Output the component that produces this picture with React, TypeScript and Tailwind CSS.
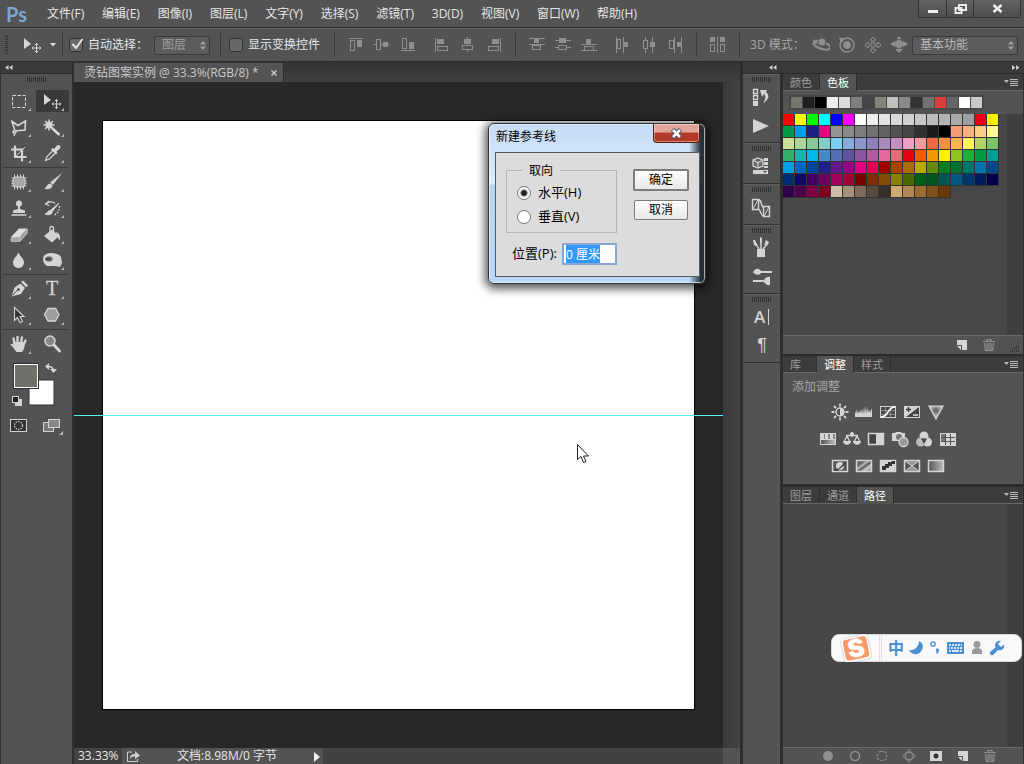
import React, { useEffect, useRef, useState } from 'react';

const LIGHT = '#d4d4d4';
const DIM = '#8f8f8f';

const MENUS = ['文件(F)', '编辑(E)', '图像(I)', '图层(L)', '文字(Y)', '选择(S)', '滤镜(T)', '3D(D)', '视图(V)', '窗口(W)', '帮助(H)'];

const RECENT = ['#75766c', '#1f1f1d', '#000000', '#efefef', '#dddddd', '#7f7f7f', '#444444', '#828376', '#c0c0c0', '#8a8a8a', '#333333', '#727272', '#dc3e3e', '#666666', '#ffffff', '#c9c9c9'];

const SWATCHES = [
  '#ff0000', '#ffff00', '#00ff00', '#00ffff', '#0000ff', '#ff00ff', '#ffffff', '#eeeeee', '#e4e4e4', '#dadada', '#d0d0d0', '#c6c6c6', '#bcbcbc', '#b3b3b3', '#a9a9a9', '#9f9f9f', '#e60012', '#fff100',
  '#009944', '#00a0e9', '#1d2088', '#e4007f', '#959595', '#898989', '#7d7d7d', '#717171', '#626262', '#535353', '#464646', '#313131', '#1c1c1c', '#000000', '#f29b76', '#f6b37f', '#facd89', '#fff799',
  '#cce198', '#acd598', '#89c997', '#84ccc9', '#7ecef4', '#88abda', '#8c97cb', '#8f82bc', '#aa89bd', '#c490bf', '#f19ec2', '#f29c9f', '#ec6941', '#f19149', '#f8b551', '#fff45c', '#b3d465', '#80c269',
  '#32b16c', '#13b5b1', '#00b7ee', '#448aca', '#556fb5', '#5f52a0', '#8957a1', '#ae5da1', '#ea68a2', '#eb6877', '#e60012', '#eb6100', '#f39800', '#fff100', '#8fc31f', '#22ac38', '#009944', '#009e96',
  '#00a0e9', '#0068b7', '#00479d', '#1d2088', '#601986', '#920783', '#e4007f', '#e5004f', '#a40000', '#a84200', '#ac6a00', '#b7aa00', '#638c0b', '#097c25', '#007130', '#00736d', '#0075a9', '#004986',
  '#002e73', '#100964', '#440062', '#6a005f', '#a4005b', '#a40035', '#7d0000', '#7f2d00', '#834e00', '#8a8000', '#486a00', '#005e15', '#005520', '#005752', '#005982', '#003567', '#001c58', '#03004c',
  '#31004a', '#500047', '#7e0043', '#7d0022', '#cfbea7', '#a5917a', '#7e6b5a', '#59493f', '#362e2b', '#cfa972', '#b28850', '#996c33', '#81511c', '#6a3906',
];

// four-way arrow used by the move tool
const moveCross = (
  <g stroke={LIGHT} fill="none">
    <path d="M20.5 11.500v9M16 16h9" />
    <path d="M19 13l1.500-1.500 1.500 1.500M19 19l1.500 1.500 1.500-1.500M17.500 14.500l-1.500 1.500 1.500 1.500M23.500 14.500l1.500 1.500-1.500 1.500" />
  </g>
);

// every tool is drawn in a 32x26 cell
const TOOLS: { name: string; art: React.ReactNode; plain?: boolean }[][] = [
  [
    { name: '矩形选框', art: <rect x="9.500" y="7.500" width="13" height="12" fill="none" stroke={LIGHT} strokeDasharray="3.500 1.500" /> },
    { name: '移动', art: <><path d="M8 6v11l7-5z" fill={LIGHT} />{moveCross}</> },
    { name: '多边形套索', art: <path d="M9 7.500l6 4 7.500-4.500-.5 9-10 1zM12 16.500c-2 0-3 2-1 2.500s3-2 1.500-2.500M11 19c.5 1 1 2 0 3" fill="none" stroke={LIGHT} strokeWidth="1.600" /> },
    { name: '魔棒', art: <><path d="M13 5.500v11M7.500 11h11M9 7l8 8M17 7l-8 8" stroke={LIGHT} strokeWidth="1.500" /><circle cx="13" cy="11" r="3.500" fill={LIGHT} /><path d="M16 14l7.500 7" stroke={LIGHT} strokeWidth="2.500" /></> },
    { name: '裁剪', art: <><path d="M12 5.500v11.500h11.500M8 9.500h11v12" fill="none" stroke={LIGHT} strokeWidth="2.200" /><path d="M13 16l9-9" stroke={LIGHT} /></> },
    { name: '吸管', art: <><path d="M9.500 20.500l1.500-4 6-6 2.500 2.500-6 6z" fill="#555" stroke={LIGHT} strokeWidth="1.300" /><path d="M15 9.500l1.500-1.500 1.500 1 3-3.500c2-1.500 4.500 1 3 3l-3.500 3 1 1.500-1.500 1.500z" fill={LIGHT} /></> },
  ],
  [
    { name: '修补', art: <><path d="M11.500 5.500v15M14.500 5.500v15M17.500 5.500v15M20.500 5.500v15M8.500 9h15M8.500 12h15M8.500 14.500h15M8.500 17h15" stroke={LIGHT} /><rect x="10" y="8" width="12" height="10" rx="3" fill="#a8a8a8" stroke={LIGHT} /></> },
    { name: '画笔', art: <><path d="M25 5l-8 10.500-2.500-2z" fill={LIGHT} stroke={LIGHT} strokeWidth=".6" /><path d="M8 19.500c2 0 2.500-3.500 4.500-4.500s4.500 1 3.500 3-5 3-8 1.500z" fill={LIGHT} /></> },
    { name: '仿制图章', art: <><circle cx="16" cy="8.500" r="3" fill={LIGHT} /><path d="M15 10h2v4l5 1.500v2.500h-12v-2.500l5-1.500z" fill={LIGHT} /><path d="M8.500 20h15" stroke={LIGHT} strokeWidth="1.500" /></> },
    { name: '历史记录画笔', art: <><path d="M9 19c2 0 2.500-3 4.500-3.500s3.500 1 2.500 2.500-4 2.500-7 1zM23 8l-6.500 8-1.500-1z" fill={LIGHT} stroke={LIGHT} /><path d="M10 9c3-3 7-2.500 9-.5M13 6l-3.500 3 4 1.500" fill="none" stroke={LIGHT} strokeWidth="1.300" /><path d="M23.500 11c0 4-1.500 7-5 9" fill="none" stroke={LIGHT} strokeWidth="1.500" strokeDasharray="1.500 1.500" /></> },
    { name: '橡皮擦', art: <><path d="M8 16l8-8.500h8.500l-7.500 8.500z" fill="#dedede" /><path d="M8 16.500h9v4H8zM17.500 16.500l7-8v3.500l-7 8z" fill="#a6a6a6" stroke={LIGHT} strokeWidth=".6" /></> },
    { name: '油漆桶', art: <><path d="M8 15l8-6.500 7 6.500-7 6.500z" fill={LIGHT} /><path d="M14 13V7c0-2 3.500-2 3.500 0v5" fill="none" stroke={LIGHT} strokeWidth="1.300" /><path d="M20 11c3.500 1 4.500 4 4 8-2-.5-2.500-3-3-5z" fill={LIGHT} /></> },
    { name: '模糊', art: <path d="M15.500 5.500c1.500 4 5.500 6 5.500 10a5.300 5.300 0 0 1-11 0c0-4 4-6 5.500-10z" fill={LIGHT} /> },
    { name: '海绵', art: <><path d="M7 12c0-4 4-6 8-6 4 0 8 1 10 4l1 6-2 4-5-1h-5c-4 1-7-3-7-7z" fill={LIGHT} /><ellipse cx="13" cy="12" rx="3.500" ry="2.500" fill="#555" stroke="#999" strokeWidth=".6" /><path d="M9 12h4" stroke="#444" strokeWidth="1.500" /></> },
  ],
  [
    { name: '钢笔', art: <><path d="M8.500 20.500l3-9 6-4 4.500 4.500-4 6z" fill={LIGHT} /><path d="M18 6l2-1.500 5 5-1.500 2z" fill={LIGHT} /><path d="M9.500 19.500l5.500-6" stroke="#444" /><circle cx="15.500" cy="13.500" r="1.300" fill="#444" /></> },
    { name: '文字', art: <text x="16" y="19" textAnchor="middle" fontSize="20" fill={LIGHT} stroke={LIGHT} strokeWidth=".3" fontFamily="Liberation Serif, serif">T</text> },
    { name: '路径选择', art: <path d="M11.500 5.500v13l3-3 2.500 5 2.500-1-2.500-5h4z" fill="#333" stroke={LIGHT} strokeWidth="1.100" /> },
    { name: '多边形', art: <path d="M8.500 12.500l3.500-6h7.500l3.500 6-3.500 6.500H12z" fill="#9c9c9c" stroke={LIGHT} strokeWidth="1.300" /> },
  ],
  [
    { name: '抓手', art: <><path d="M11.500 12.500L10.500 7.500M14.500 11.500V6M18 11.500L19 6.500M20.500 13.500L22.500 9.500" stroke={LIGHT} strokeWidth="2.400" strokeLinecap="round" /><path d="M10.500 11h11.500c0 4-1 8-3 10h-5.500c-2-3-4-5-6-7.500 1-1.500 3-.5 3.500 1z" fill={LIGHT} /></> },
    { name: '缩放', plain: true, art: <><circle cx="14" cy="10" r="5" fill="#888" stroke={LIGHT} strokeWidth="1.500" /><path d="M18 14l5.500 6" stroke={LIGHT} strokeWidth="3" strokeLinecap="round" /></> },
  ],
];

const ALIGN: { name: string; art: React.ReactNode }[][] = [
  [
    { name: '顶对齐', art: <><path d="M2 2.500h14" /><rect x="3.500" y="4.500" width="4" height="10" /><rect x="10.500" y="4.500" width="4" height="6" fill={DIM} /></> },
    { name: '垂直居中对齐', art: <><path d="M1 8.500h3M8 8.500h8" /><rect x="3.500" y="3.500" width="4" height="10" /><rect x="10.500" y="6.500" width="4" height="4" fill={DIM} /></> },
    { name: '底对齐', art: <><path d="M2 14.500h14" /><rect x="3.500" y="2.500" width="4" height="10" /><rect x="10.500" y="6.500" width="4" height="6" fill={DIM} /></> },
  ],
  [
    { name: '左对齐', art: <><path d="M2.500 2v14" /><rect x="4.500" y="3.500" width="6" height="4" fill={DIM} /><rect x="4.500" y="10.500" width="10" height="4" /></> },
    { name: '水平居中对齐', art: <><path d="M8.500 1v15" /><rect x="5.500" y="3.500" width="6" height="4" fill={DIM} /><rect x="3.500" y="9.500" width="10" height="4" fill="#535353" /></> },
    { name: '右对齐', art: <><path d="M15.500 2v14" /><rect x="7.500" y="3.500" width="6" height="4" fill={DIM} /><rect x="3.500" y="10.500" width="10" height="4" /></> },
  ],
  [
    { name: '按顶分布', art: <><path d="M1 2.500h16M1 8.500h16" /><rect x="6.500" y="3.500" width="4" height="3" fill={DIM} /><rect x="4.500" y="9.500" width="8" height="4" /></> },
    { name: '垂直居中分布', art: <><path d="M1 4.500h16M1 11.500h16" /><rect x="5.500" y="2.500" width="6" height="4" fill={DIM} /><rect x="4.500" y="9.500" width="8" height="4" fill="#535353" /></> },
    { name: '按底分布', art: <><path d="M1 8.500h16M1 14.500h16" /><rect x="6.500" y="3.500" width="4" height="4" fill={DIM} /><rect x="4.500" y="10.500" width="9" height="4" /></> },
  ],
  [
    { name: '按左分布', art: <><path d="M2.500 1v16M9.500 1v16" /><rect x="3.500" y="3.500" width="3" height="9" /><rect x="10.500" y="6.500" width="3" height="4" fill={DIM} /></> },
    { name: '水平居中分布', art: <><path d="M5.500 1v16M12.500 1v16" /><rect x="3.500" y="4.500" width="4" height="8" fill="#535353" /><rect x="10.500" y="6.500" width="4" height="4" fill={DIM} /></> },
    { name: '按右分布', art: <><path d="M8.500 1v16M15.500 1v16" /><rect x="3.500" y="4.500" width="4" height="8" /><rect x="11.500" y="6.500" width="3" height="4" fill={DIM} /></> },
  ],
];

const MODES: { name: string; art: React.ReactNode }[] = [
  { name: '环绕', art: <><path d="M6 5c-4-1-5 4-2 5.500s8 4 12 3 1.500-6-3-6" fill="none" strokeWidth="2" /><circle cx="10" cy="6" r="4" fill={DIM} stroke="#5c5c5c" /><path d="M0 9l2-6 4 4z" fill={DIM} stroke="none" /></> },
  { name: '滚动', art: <><circle cx="9" cy="9" r="7" fill="none" strokeWidth="1.500" /><circle cx="9" cy="9" r="3.500" fill={DIM} /><path d="M1 1l6 2-4 4z" fill={DIM} stroke="none" /></> },
  { name: '平移', art: <path d="M9 1l3 3h-2v4h4V6l3 3-3 3v-2h-4v4h2l-3 3-3-3h2v-4H4v2L1 9l3-3v2h4V4H6z" fill="#535353" /> },
  { name: '滑动', art: <><circle cx="9" cy="8" r="4" fill={DIM} stroke="none" /><path d="M9 0l2.500 3h-5zM0 8l5-3v6zM18 8l-5-3v6zM9 17l-4-4h8z" fill={DIM} stroke="none" /><path d="M2 8h14M9 2v12" /></> },
];

const ADJUSTMENTS: { name: string; art: React.ReactNode }[][] = [
  [
    { name: '亮度/对比度', art: <><circle cx="9" cy="9" r="4" fill="none" stroke={LIGHT} strokeWidth="1.500" /><path d="M9 5a4 4 0 0 1 0 8z" fill={LIGHT} /><path d="M9 .5v3M9 14.500v3M.5 9h3M14.500 9h3M3 3l2 2M13 13l2 2M15 3l-2 2M5 13l-2 2" stroke={LIGHT} strokeWidth="1.800" /></> },
    { name: '色阶', art: <path d="M0 14V8l1 3 1-5 1 5 1-3 1 2 1-4 1 5 1-6 1 6 1-8 1 8 1-7 1 6 1-4 1 4 2-5v9z" fill={LIGHT} /> },
    { name: '曲线', art: <><rect x="1.500" y="3.500" width="15" height="11" fill="#474747" stroke={LIGHT} /><path d="M6.500 3v12M11.500 3v12M1 7.500h16M1 11.500h16" stroke="#aaa" strokeWidth=".7" /><path d="M2 14c8 0 6-10 14-10" fill="none" stroke="#fff" strokeWidth="1.500" /></> },
    { name: '曝光度', art: <><rect x="1.500" y="3.500" width="15" height="11" fill={LIGHT} stroke={LIGHT} /><path d="M3 14L16 4v10z" fill="#444" /><path d="M3 6.500h5M5.500 4v5" stroke="#333" strokeWidth="1.300" /><path d="M10 12h5" stroke="#fff" strokeWidth="1.300" /></> },
    { name: '自然饱和度', art: <path d="M2 3h14L9 16z" fill="url(#glow)" stroke={LIGHT} strokeWidth="1.200" /> },
  ],
  [
    { name: '色相/饱和度', art: <><rect x="1" y="3" width="16" height="12" fill={LIGHT} /><path d="M5 4h1v5H5zM9 4h2v5H9zM14 4h2v5h-2z" fill="#888" /><path d="M2 10h14v4H2z" fill="url(#ramp)" /></> },
    { name: '色彩平衡', art: <><path d="M9 3v4M3 5.500h12M4 6l-3 6M4 6l3 6M14 6l-3 6M14 6l3 6" stroke={LIGHT} strokeWidth="1.300" /><circle cx="9" cy="4" r="2" fill={LIGHT} /><path d="M0 11h8c0 5-8 5-8 0zM10 11h8c0 5-8 5-8 0z" fill={LIGHT} /></> },
    { name: '黑白', art: <><rect x="1.500" y="3.500" width="15" height="11" fill="#444" stroke={LIGHT} strokeWidth="1.500" /><path d="M9 3h8v12H9z" fill={LIGHT} /></> },
    { name: '照片滤镜', art: <><path d="M1 3h3l1-1h5l1 1h3v8H1z" fill={LIGHT} /><circle cx="8" cy="7" r="3" fill="#777" /><circle cx="12.500" cy="12" r="4.500" fill="#999" stroke={LIGHT} strokeWidth="1.300" /></> },
    { name: '通道混合器', art: <><circle cx="9" cy="6" r="4.500" fill={LIGHT} /><circle cx="5.500" cy="12" r="4.500" fill="#bbb" /><circle cx="12.500" cy="12" r="4.500" fill={LIGHT} /><path d="M9 14L6 8.500h6z" fill="#444" /></> },
    { name: '颜色查找', art: <><rect x="1" y="3" width="16" height="13" fill={LIGHT} /><path d="M6.500 4v11M11.500 4v11M2 7.500h14M2 11.500h14" stroke="#555" /><path d="M2 4h4v3H2zM2 8h4v3H2z" fill="#777" /></> },
  ],
  [
    { name: '反相', art: <><rect x="1.500" y="3.500" width="15" height="11" fill="#555" stroke={LIGHT} strokeWidth="1.500" /><circle cx="9" cy="9" r="4" fill={LIGHT} /><path d="M3 14L15 4v3L6 14z" fill="#444" /><path d="M6 6.500c-1 3 0 5 1 5.500l5-5z" fill={LIGHT} /></> },
    { name: '色调分离', art: <><rect x="1.500" y="3.500" width="15" height="11" fill="url(#stripes)" stroke={LIGHT} strokeWidth="1.500" /></> },
    { name: '阈值', art: <><rect x="1.500" y="3.500" width="15" height="11" fill={LIGHT} stroke={LIGHT} strokeWidth="1.500" /><path d="M3 9h3V7h3V5h4V4h3v3h-3v2h-3v2H7v2H3z" fill="#333" /></> },
    { name: '可选颜色', art: <><rect x="1.500" y="3.500" width="15" height="11" fill="#555" stroke={LIGHT} strokeWidth="1.500" /><path d="M2 4h14L9 9zM2 14h14L9 9z" fill="#9a9a9a" /><path d="M2 4l14 10M16 4L2 14" stroke={LIGHT} /></> },
    { name: '渐变映射', art: <><rect x="1.500" y="3.500" width="15" height="11" fill="url(#ramp)" stroke={LIGHT} strokeWidth="1.500" /></> },
  ],
];

const DOCK: { name: string; art: React.ReactNode }[][] = [
  [
    { name: '历史记录', art: <><path d="M2.500 3.500h4v4h-4zM2.500 9.500h4v4h-4z" fill="none" stroke={LIGHT} strokeWidth="1.300" /><path d="M2 15h5v5H2z" fill={LIGHT} /><path d="M9 4h7l-1 2c4 3 3 8-3 11 3-4 3-7 1-9l-2 3z" fill={LIGHT} /></> },
    { name: '动作', art: <path d="M2 4l16 7-16 7z" fill={LIGHT} /> },
  ],
  [
    { name: '属性', art: <><path d="M7 2l5 2v6l-5 2-5-2V4z" fill="#666" stroke={LIGHT} strokeWidth="1.300" /><path d="M2.500 4.500L7 6.500l4.500-2M7 6.500V12" fill="none" stroke={LIGHT} strokeWidth="1.200" /><path d="M13 2h4v3h-4zM13 6h4v3h-4zM13 10h4v2h-4zM2 14h15v4H2z" fill={LIGHT} /><path d="M12 15h4l-2 2z" fill="#444" /></> },
  ],
  [
    { name: '仿制源', art: <><path d="M1.500 2.500h6v10h-6zM12.500 9.500h6v10h-6zM7.500 2.500c4 1 2 7 5 8M7.500 12c2 1 2 6 5 7.500" fill="none" stroke={LIGHT} strokeWidth="1.400" /><path d="M2 12L7 3M13 19l5-9" stroke={LIGHT} /></> },
  ],
  [
    { name: '画笔预设', art: <><path d="M6 12h8v8H6z" fill={LIGHT} /><path d="M8 12L4 5M10 12V2M12 12l5-6" stroke={LIGHT} strokeWidth="1.500" /><path d="M2 3l2 0 2 5-1 1-2-1zM9 0l2 1v5H9zM13 8l2-5 3 2-1 2z" fill={LIGHT} /></> },
    { name: '画笔', art: <><path d="M2 6c3-5 7-3 8-1h11v2H10c-2 3-6 2-8-1zM2 14h10v2H2z" fill={LIGHT} /><path d="M11 15c3-1 4-5 8-4v8c-4 1-5-3-8-4z" fill={LIGHT} /></> },
  ],
  [
    { name: '字符', art: <><text x="3" y="17" fontSize="17" fontWeight="600" fill={LIGHT} fontFamily="Open Sans, sans-serif">A</text><path d="M17.500 3v16" stroke={LIGHT} /></> },
    { name: '段落', art: <text x="11" y="16" textAnchor="middle" fontSize="18" fill={LIGHT} fontFamily="Liberation Sans, sans-serif">¶</text> },
  ],
];

const newIcon = <><path d="M3 3h10v10H8V8H3z" fill={LIGHT} /><path d="M3 9h4v4z" fill={LIGHT} /></>;
const trashIcon = <path d="M2 4.500h12M6 4V2.500h4V4M3.500 6l1 7.500h7l1-7.500M6 6v7M8 6v7M10 6v7" fill="none" stroke={DIM} strokeWidth="1.200" />;

const PATH_ACTIONS: { name: string; art: React.ReactNode }[] = [
  { name: '用前景色填充路径', art: <circle cx="8" cy="8" r="5" fill={DIM} /> },
  { name: '用画笔描边路径', art: <circle cx="8" cy="8" r="4.500" fill="none" stroke={DIM} strokeWidth="1.500" /> },
  { name: '将路径作为选区载入', art: <rect x="3.500" y="3.500" width="9" height="9" rx="3" fill="none" stroke={DIM} strokeWidth="1.200" strokeDasharray="2.500 1.500" /> },
  { name: '从选区生成工作路径', art: <><circle cx="8" cy="8" r="4" fill="none" stroke={DIM} strokeWidth="1.500" /><path d="M7 2h2v3H7zM7 11h2v3H7zM2 7h3v2H2zM11 7h3v2h-3z" fill="#535353" stroke={DIM} strokeWidth=".8" /></> },
  { name: '添加蒙版', art: <><path d="M2 3h12v10H2z" fill={LIGHT} /><circle cx="8" cy="8" r="2.500" fill="#333" /></> },
  { name: '创建新路径', art: newIcon },
  { name: '删除路径', art: trashIcon },
];

function Grip() {
  return (
    <svg width="20" height="5" aria-hidden="true">
      <path d="M.5 0v5M2.500 0v5M4.500 0v5M6.500 0v5M8.500 0v5M10.500 0v5M12.500 0v5M14.500 0v5M16.500 0v5M18.500 0v5" stroke="#303030" />
    </svg>
  );
}

function Divider() {
  return <div className="h-6 w-px shrink-0 bg-[#3a3a3a]" />;
}

function Chevrons({ right }: { right?: boolean }) {
  return (
    <svg width="8" height="5" aria-hidden="true">
      <path d={right ? 'M0 0l3.500 2.500L0 5zM4 0l3.500 2.500L4 5z' : 'M3.500 0L0 2.500 3.500 5zM7.500 0L4 2.500 7.500 5z'} fill="#cfcfcf" />
    </svg>
  );
}

function DarkSelect({ label, value, className }: { label: string; value: string; className: string }) {
  return (
    <div className={`relative h-[19px] ${className}`}>
      <select
        aria-label={label}
        className="h-full w-full appearance-none rounded-[2px] border border-[#3a3a3a] bg-[#5b5b5b] pl-[7px] font-[inherit] text-xs leading-4 text-inherit outline-none"
      >
        <option>{value}</option>
      </select>
      <svg className="pointer-events-none absolute top-[5px] right-[4px]" width="6" height="9" aria-hidden="true">
        <path d="M0 3.500L3 0l3 3.500zM0 5.500L3 9l3-3.500z" fill="#a0a0a0" />
      </svg>
    </div>
  );
}

function DarkCheck({ label, defaultChecked }: { label: string; defaultChecked?: boolean }) {
  const [on, setOn] = useState(!!defaultChecked);
  return (
    <label className="flex shrink-0 items-center gap-[5px]">
      <span className="relative flex">
        <input
          type="checkbox"
          checked={on}
          onChange={(e) => setOn(e.target.checked)}
          className="h-[14px] w-[14px] appearance-none rounded-[2px] border border-[#333] bg-[#686868]"
        />
        {on && (
          <svg className="pointer-events-none absolute bottom-[2px] left-[2px]" width="13" height="12" aria-hidden="true">
            <path d="M1.500 6l3.500 4L11.500 1" fill="none" stroke="#e8e8e8" strokeWidth="2" />
          </svg>
        )}
      </span>
      {label}
    </label>
  );
}

function PanelTabs({ tabs, active }: { tabs: string[]; active: number }) {
  return (
    <div role="tablist" className="flex h-[17px] shrink-0 border-b border-[#686868] bg-[#3c3c3c]">
      {tabs.map((t, i) => (
        <button
          key={t}
          role="tab"
          aria-selected={i === active}
          className={
            i === active
              ? 'h-[17px] border-r border-[#2e2e2e] bg-[#535353] px-[7px] text-[11px] leading-[17px] text-white'
              : 'h-4 min-w-[34px] border-r border-[#2e2e2e] px-[7px] text-left text-[11px] leading-[17px] text-[#9c9c9c]'
          }
        >
          {t}
        </button>
      ))}
      <button aria-label="面板菜单" className="mr-1 ml-auto">
        <svg width="15" height="9">
          <path d="M0 2h5L2.500 5z" fill="#bbb" />
          <path d="M6 1.500h8M6 3.500h8M6 5.500h8M6 7.500h8" stroke="#bbb" />
        </svg>
      </button>
    </div>
  );
}

function Toolbox() {
  return (
    <aside className="flex w-[74px] shrink-0 flex-col border-r-2 border-l border-r-[#2f2f2f] border-l-[#333]">
      <div className="flex h-3 items-center border-b border-[#2c2c2c] bg-[#3a3a3a] pl-1">
        <Chevrons />
      </div>
      <div className="flex h-[14px] justify-center pt-[3px]">
        <Grip />
      </div>
      <div className="flex flex-col pr-1 pl-[2px]">
        {TOOLS.map((group, g) => (
          <div key={g} className={g ? 'border-t border-[#3a3a3a] pt-px' : ''}>
            <div className="grid grid-cols-[33px_33px] pb-px">
              {group.map((t) => (
                <button
                  key={t.name}
                  aria-label={t.name}
                  className={t.name === '移动' ? 'h-[26px] rounded-[2px] bg-[#393939] bg-clip-content py-[2px]' : 'h-[26px]'}
                >
                  <svg width="32" height="26" viewBox="0 0 32 26" className={t.name === '移动' ? '-my-[2px]' : ''}>
                    {t.art}
                    {!t.plain && <path d="M28 20v3h-3z" fill="#b5b5b5" />}
                  </svg>
                </button>
              ))}
            </div>
          </div>
        ))}
      </div>
      <div className="px-2 pt-[3px]">
        <svg width="54" height="74" viewBox="9 360 54 74" role="img" aria-label="前景色和背景色">
          <rect x="29" y="379" width="25" height="25" fill="#fff" stroke="#333" />
          <rect x="13.500" y="362.500" width="25" height="25" fill="#fff" stroke="#333" />
          <rect x="15" y="364" width="22" height="22" fill="#6f7069" />
          <path d="M48 365.500c4 0 5.500 1.500 5.500 5" fill="none" stroke={LIGHT} strokeWidth="1.500" />
          <path d="M49 362v7l-4-3.500zM50 368h7l-3.500 4z" fill={LIGHT} />
          <rect x="15" y="398" width="7" height="7" fill={LIGHT} />
          <rect x="12.500" y="395.500" width="6" height="6" fill="#222" stroke={LIGHT} />
          <rect x="10.500" y="418.500" width="16" height="12" fill="#333" stroke={LIGHT} />
          <circle cx="18.500" cy="424.500" r="4" fill="none" stroke={LIGHT} strokeWidth="1.300" strokeDasharray="1.300 1.300" />
          <rect x="43.500" y="421.500" width="10" height="9" fill="#777" stroke={LIGHT} />
          <rect x="48.500" y="418.500" width="11" height="8" fill="#888" stroke={LIGHT} />
          <path d="M63 430v4h-4z" fill="#b5b5b5" />
        </svg>
      </div>
    </aside>
  );
}

function GuideDialog() {
  const field = useRef<HTMLInputElement>(null);
  const [axis, setAxis] = useState('h');

  useEffect(() => {
    field.current?.focus();
    field.current?.select();
  }, []);

  const radio =
    'h-[14px] w-[14px] appearance-none rounded-full border border-[#777] bg-white bg-[radial-gradient(circle,#222_0_2px,#666_3px,#f4f4f4_4px)] not-checked:bg-none';

  return (
    <div
      role="dialog"
      aria-label="新建参考线"
      className="absolute top-[123px] left-[488px] w-[218px] rounded-[6px] border border-[#2c3238] bg-[linear-gradient(90deg,transparent_0_200px,rgba(10,15,20,0.85)_212px),linear-gradient(180deg,#c5dcf5_0,#dcebfa_60px,#b9d3ee_61px,#b9d9fb)] pr-[5px] pb-[6px] pl-[6px] shadow-[0_2px_10px_3px_rgba(0,0,0,0.65),inset_0_0_0_1px_rgba(255,255,255,0.6)]"
    >
      <div className="flex h-7 items-start justify-between">
        <span className="pt-[5px] pl-px text-xs leading-4 text-black">新建参考线</span>
        <button
          aria-label="关闭"
          className="flex h-[19px] w-[47px] items-center justify-center rounded-b-[4px] border border-t-0 border-[#5c1a14] bg-linear-to-b from-[#e0a498] from-45% to-[#b23a28] to-50% shadow-[inset_0_0_0_1px_rgba(255,255,255,0.4)]"
        >
          <svg width="13" height="11" aria-hidden="true">
            <path d="M2.500 1.500l8 8M10.500 1.500l-8 8" stroke="#444c5c" strokeWidth="4.500" />
            <path d="M3 2l7 7M10 2L3 9" stroke="#fff" strokeWidth="2.600" />
          </svg>
        </button>
      </div>
      <div className="flex justify-between border border-[#525c66] bg-[#dcdcdc] px-[10px] pt-[9px] pb-[11px] text-[13px] text-black">
        <div>
          <fieldset className="h-[71px] w-[111px] border border-[#b4b4b4] pl-[10px]">
            <legend className="ml-[5px] px-[7px] text-xs leading-[17px]">取向</legend>
            <div className="pt-[2px]">
              <label className="flex h-6 items-center gap-[7px]">
                <input type="radio" name="axis" className={radio} checked={axis === 'h'} onChange={() => setAxis('h')} />
                水平(H)
              </label>
              <label className="flex h-6 items-center gap-[7px]">
                <input type="radio" name="axis" className={radio} checked={axis === 'v'} onChange={() => setAxis('v')} />
                垂直(V)
              </label>
            </div>
          </fieldset>
          <label className="mt-[10px] flex items-center justify-between pl-[6px]">
            位置(P):
            <input
              ref={field}
              defaultValue="0 厘米"
              className="h-[22px] w-[55px] border-2 border-[#86a8d0] bg-white px-[2px] font-[inherit] text-xs outline-none selection:bg-[#3399ff] selection:text-white"
            />
          </label>
        </div>
        <div className="flex flex-col items-center gap-[9px] pt-[7px] text-xs">
          <button className="h-[22px] w-14 rounded-[2px] border-2 border-[#7c7c7c] bg-linear-to-b from-white to-[#e8e8e8]">确定</button>
          <button className="h-5 w-[54px] rounded-[2px] border border-[#7c7c7c] bg-linear-to-b from-white to-[#e8e8e8]">取消</button>
        </div>
      </div>
    </div>
  );
}

function InputMethodBar() {
  return (
    <div className="absolute right-[2px] bottom-[102px] flex h-7 w-[191px] items-center rounded-lg border border-[#d8d8d8] bg-[#f9f9f9] text-[#4a8fd2]">
      <svg width="47" height="28" viewBox="0 0 47 28" className="shrink-0" role="img" aria-label="搜狗输入法">
        <g transform="rotate(-12 24 14)">
          <rect x="10" y="2" width="28" height="25" rx="4" fill="#fff" stroke="#ddd" />
          <rect x="12" y="4" width="24" height="21" rx="3" fill="#f99a6b" />
          <text x="24" y="23" textAnchor="middle" fontSize="25" fontWeight="900" fill="#fff" fontFamily="Inter, sans-serif">S</text>
        </g>
      </svg>
      <div className="mr-[6px] h-7 w-[3px] border-x border-[#f0dada]" />
      <button className="w-4 text-base leading-6 font-bold">中</button>
      <svg width="104" height="20" viewBox="0 0 104 20" className="ml-[5px]" aria-hidden="true" fill="currentColor">
        <path d="M10 3c5 2 5 8 1 11.500S2 16 0 12c5 1 10-3 10-9z" />
        <circle cx="24" cy="6" r="2.200" fill="none" stroke="currentColor" strokeWidth="1.300" />
        <path d="M27 11c2-1 3 0 3 1 0 2-1 4-3 4 1-1 1-2 0-2.500z" />
        <path d="M38 4h17v12H38z" />
        <path d="M40 7h2M43 7h2M46 7h2M49 7h2M52 7h1M40 10h1M42 10h2M45 10h2M48 10h2M51 10h2M40 13h2M43 13h7M51 13h2" stroke="#fff" strokeWidth="1.500" />
        <circle cx="68" cy="6.500" r="3.500" fill="#9a9a9a" />
        <path d="M63 16v-3c0-4 10-4 10 0v3z" fill="#9a9a9a" />
        <path d="M92 3c-4-1-7 3-5.500 6.500L81 14c-1 2 1 4 3 3l5-5c4 1.500 7-2 6-5.500L92 9l-3-3z" />
      </svg>
    </div>
  );
}

function WindowButtons() {
  const base = 'flex h-[17px] items-center justify-center border-r border-[#333] bg-linear-to-b from-[#636363] to-[#4e4e4e]';
  return (
    <div className="mr-[3px] ml-auto flex self-start overflow-hidden rounded-b-[3px] border-b border-l border-[#333]">
      <button aria-label="最小化" className={`${base} w-7`}>
        <svg width="10" height="10"><path d="M0 6h10v3H0z" fill="#eee" /></svg>
      </button>
      <button aria-label="还原" className={`${base} w-[27px]`}>
        <svg width="13" height="12"><path d="M5 2h7v5H5zM1.500 5h6v5h-6z" fill="#535353" stroke="#eee" strokeWidth="2" /></svg>
      </button>
      <button aria-label="关闭窗口" className={`${base} w-[47px]`}>
        <svg width="11" height="9"><path d="M1.500 1l8 7M9.500 1l-8 7" stroke="#eee" strokeWidth="2.600" /></svg>
      </button>
    </div>
  );
}

export default function App() {
  return (
    <div className="relative flex h-screen flex-col overflow-hidden bg-[#535353] font-['Open_Sans','Noto_Sans_CJK_SC',sans-serif] text-xs text-[#e6e6e6]">
      {/* fills shared by the adjustment icons */}
      <svg width="0" height="0" className="absolute" aria-hidden="true">
        <defs>
          <linearGradient id="ramp"><stop stopColor="#555" /><stop offset="1" stopColor="#bbb" /></linearGradient>
          <radialGradient id="glow" cx=".5" cy=".35" r=".5"><stop stopColor="#555" /><stop offset="1" stopColor="#ccc" /></radialGradient>
          <linearGradient id="stripes" x2="1" y2="1">
            <stop stopColor="#666" /><stop offset=".3" stopColor="#666" /><stop offset=".4" stopColor="#bbb" />
            <stop offset=".55" stopColor="#5a5a5a" /><stop offset=".7" stopColor="#ccc" /><stop offset="1" stopColor="#777" />
          </linearGradient>
        </defs>
      </svg>

      <header className="flex h-7 shrink-0 items-center border-b border-[#2c2c2c] pl-[6px]">
        <span className="w-[41px] font-[Lato,sans-serif] text-xl leading-6 font-bold text-[#7ba6d6]">Ps</span>
        <nav className="flex w-[590px] justify-between whitespace-nowrap">
          {MENUS.map((m) => (
            <button key={m}>{m}</button>
          ))}
        </nav>
        <WindowButtons />
      </header>

      <div className="flex h-[34px] shrink-0 items-center border-t border-b border-t-[#666] border-b-[#2c2c2c] pl-[5px] whitespace-nowrap">
        <svg width="3" height="20" className="shrink-0" aria-hidden="true"><path d="M1.500 0v20" stroke="#333" strokeWidth="3" strokeDasharray="1 1" /></svg>
        <button aria-label="当前工具" className="ml-2 flex shrink-0 items-center">
          <svg width="32" height="26" viewBox="0 0 32 26" className="-mr-1">
            <path d="M8 6v11l7-5z" fill={LIGHT} />
            {moveCross}
          </svg>
          <svg width="18" height="4"><path d="M6 0h6l-3 3.500z" fill="#ddd" /></svg>
        </button>
        <Divider />
        <div className="ml-[6px]"><DarkCheck label="自动选择：" defaultChecked /></div>
        <div className="mr-[10px] ml-[6px] text-[#a0a0a0]">
          <DarkSelect label="自动选择" value="图层" className="w-14" />
        </div>
        <Divider />
        <div className="mr-[14px] ml-2"><DarkCheck label="显示变换控件" /></div>
        <Divider />
        {ALIGN.map((group, g) => (
          <React.Fragment key={g}>
            {g === 2 && <Divider />}
            <div className="ml-2 flex shrink-0">
              {group.map((a) => (
                <button key={a.name} aria-label={a.name} className="flex h-[26px] w-[26px] items-center justify-center">
                  <svg width="18" height="18" fill="none" stroke={DIM}>{a.art}</svg>
                </button>
              ))}
            </div>
            {g === 1 && <div className="w-2 shrink-0" />}
          </React.Fragment>
        ))}
        <div className="w-2 shrink-0" />
        <Divider />
        <button aria-label="自动对齐图层" className="mx-2 flex w-[26px] shrink-0 justify-center">
          <svg width="18" height="18" fill="none" stroke={DIM}>
            <path d="M8.500 1v16" />
            <rect x="1.500" y="1.500" width="4" height="4" fill={DIM} /><rect x="11.500" y="1.500" width="4" height="4" fill={DIM} />
            <rect x="1.500" y="8.500" width="4" height="7" /><rect x="11.500" y="8.500" width="4" height="7" />
          </svg>
        </button>
        <Divider />
        <span className="ml-[10px] w-[58px] shrink-0 text-[#a6a6a6]">3D 模式：</span>
        {MODES.map((m) => (
          <button key={m.name} aria-label={m.name} className="flex w-[26px] shrink-0 justify-center">
            <svg width="18" height="18" fill="none" stroke={DIM}>{m.art}</svg>
          </button>
        ))}
        <div className="mr-[6px] ml-auto text-[#b8b8b8]">
          <DarkSelect label="工作区" value="基本功能" className="w-[106px]" />
        </div>
      </div>

      <div className="flex min-h-0 flex-1">
        <Toolbox />

        <main className="flex min-w-0 flex-1 flex-col">
          <div className="flex h-5 shrink-0 bg-linear-to-b from-[#333] to-[#404040] pt-px">
            <div className="flex items-center gap-3 border-r border-[#2c2c2c] bg-[#535353] pr-[6px] pl-[10px] text-[#c8c8c8]">
              烫钻图案实例 @ 33.3%(RGB/8) *
              <button aria-label="关闭文档">
                <svg width="6" height="6"><path d="M.5.5l5 5M5.500.5l-5 5" stroke="#ccc" strokeWidth="1.400" /></svg>
              </button>
            </div>
          </div>
          <div className="flex min-h-0 flex-1">
            <div className="relative flex flex-1 bg-[#282828] px-7 py-[38px]">
              <div className="flex-1 border border-black bg-white" />
              <div className="absolute inset-x-0 top-1/2 h-px bg-[#55f2f5]" />
            </div>
            <div className="w-[17px] bg-linear-to-r from-[#3a3a3a] to-[#444]" />
          </div>
          <footer className="flex h-4 shrink-0 bg-[#424242] leading-4 whitespace-nowrap">
            <span className="w-12 pl-1">33.33%</span>
            <div className="flex w-[201px] items-start bg-[#535353] pl-1">
              <svg width="14" height="13" className="mt-[2px]" aria-hidden="true">
                <path d="M6 2H1.500v9.500h10V9" fill="none" stroke="#ccc" />
                <path d="M4 9c0-4 2-5 5-5V1l5 4.500L9 9V6.500C7 6.500 5 7 4 9z" fill="#ccc" />
              </svg>
              <span className="ml-[37px]">文档:8.98M/0 字节</span>
              <svg width="6" height="10" className="mt-1 mr-[3px] ml-auto" aria-hidden="true"><path d="M0 0l6 5-6 5z" fill="#eee" /></svg>
            </div>
            <div className="ml-auto w-[17px] bg-[#535353]" />
          </footer>
        </main>

        <aside className="flex w-[284px] shrink-0 flex-col">
          <div className="flex h-3 shrink-0 items-center justify-between border-b border-l-[3px] border-[#2c2c2c] bg-[#3a3a3a] pr-1 pl-[26px]">
            <Chevrons />
            <Chevrons right />
          </div>
          <div className="flex min-h-0 flex-1">
            <div className="w-[40px] shrink-0 border-l-[3px] border-[#2e2e2e]">
              {DOCK.map((group, g) => (
                <div key={g} className="flex flex-col items-center border-t border-b border-t-[#606060] border-b-[#303030] pt-[2px]">
                  <Grip />
                  {group.map((d) => (
                    <button key={d.name} aria-label={d.name} className={group.length > 1 ? 'flex h-[29px] items-center' : 'flex h-8 items-center'}>
                      <svg width="22" height="22">{d.art}</svg>
                    </button>
                  ))}
                  {group.length > 1 && <div className="h-[2px]" />}
                </div>
              ))}
            </div>

            <div className="flex min-w-0 flex-1 flex-col border-r border-l-[3px] border-[#2e2e2e]">
              <PanelTabs tabs={['颜色', '色板']} active={1} />
              <div className="flex h-[23px] shrink-0 pt-1 pl-[6px]">
                <div className="flex h-[15px] gap-px bg-[#484848] p-[2px]">
                  {RECENT.map((c, i) => (
                    <i key={i} className="h-[11px] w-[11px]" style={{ background: c }} />
                  ))}
                </div>
              </div>
              <div className="flex h-[221px] shrink-0 bg-[#474747]">
                <div className="grid auto-rows-[12px] grid-cols-[repeat(18,12px)]">
                  {SWATCHES.map((c, i) => (
                    <button key={i} aria-label={c} className="border-r border-b border-[#333]" style={{ backgroundColor: c }} />
                  ))}
                </div>
                <div className="ml-auto w-4 bg-[#3f3f3f]" />
              </div>
              <div className="flex h-[19px] shrink-0 items-center justify-end border-t border-[#6a6a6a]">
                <button aria-label="新建色板" className="flex w-[27px] justify-center"><svg width="16" height="16">{newIcon}</svg></button>
                <button aria-label="删除色板" className="flex w-[27px] justify-center"><svg width="16" height="16">{trashIcon}</svg></button>
                <svg width="12" height="12" className="mt-1 mr-[2px] ml-[7px]" aria-hidden="true">
                  <path d="M1 10.500h10M3 8.500h8M5 6.500h6M7 4.500h4M9 2.500h2" stroke="#2a2a2a" strokeDasharray="1 1" />
                </svg>
              </div>

              <div className="h-[2px] shrink-0 bg-[#2c2c2c]" />
              <PanelTabs tabs={['库', '调整', '样式']} active={1} />
              <div className="h-[111px] shrink-0">
                <div className="h-[25px] pt-[6px] pl-[9px] leading-4 text-[#a6a6a6]">添加调整</div>
                {ADJUSTMENTS.map((row, r) => (
                  <div key={r} className="flex h-[27px] items-center justify-center pr-[30px]">
                    {row.map((a) => (
                      <button key={a.name} aria-label={a.name} className="flex w-6 justify-center">
                        <svg width="18" height="18">{a.art}</svg>
                      </button>
                    ))}
                  </div>
                ))}
              </div>

              <div className="h-[3px] shrink-0 bg-[#2c2c2c]" />
              <PanelTabs tabs={['图层', '通道', '路径']} active={2} />
              <div className="flex min-h-0 flex-1 justify-end bg-[#464646]">
                <div className="w-4 bg-[#3f3f3f]" />
              </div>
              <div className="flex h-[17px] shrink-0 justify-end border-t border-[#6a6a6a] pr-[20px]">
                {PATH_ACTIONS.map((a) => (
                  <button key={a.name} aria-label={a.name} className="flex w-[27px] justify-center">
                    <svg width="16" height="16">{a.art}</svg>
                  </button>
                ))}
              </div>
            </div>
          </div>
        </aside>
      </div>

      <GuideDialog />

      <svg className="pointer-events-none absolute top-[443px] left-[576px]" width="14" height="21" aria-hidden="true">
        <path d="M1.500 1.500v15l3.500-3 2.500 6 2.500-1-2.500-5.500h5z" fill="#fff" stroke="#222" />
      </svg>

      <InputMethodBar />
    </div>
  );
}
